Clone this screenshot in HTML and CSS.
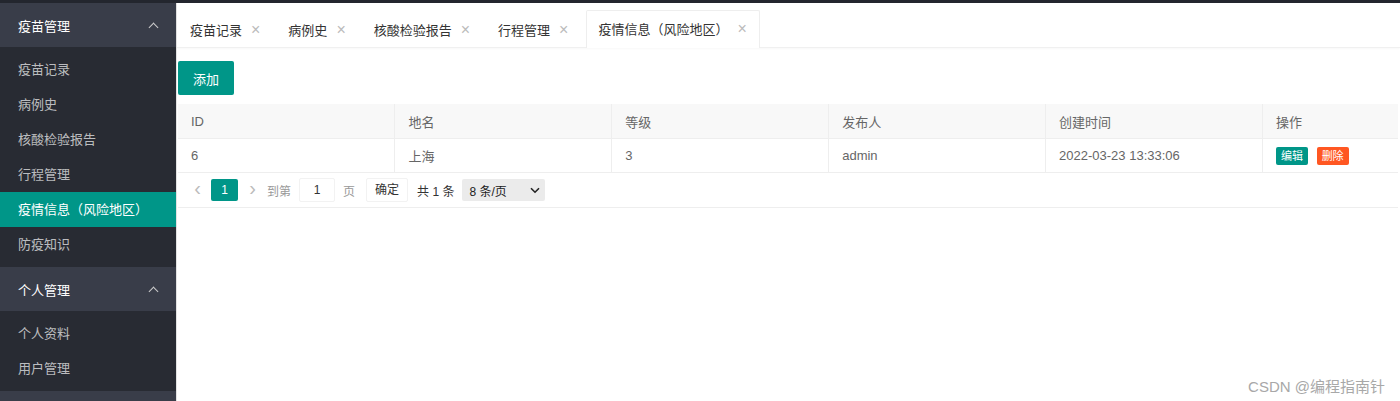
FILE: index.html
```html
<!DOCTYPE html>
<html lang="zh-CN">
<head>
    <meta charset="UTF-8">
    <title>疫情信息（风险地区）</title>
    <link rel="stylesheet" href="styles.css">
</head>
<body>
    <div class="topline"></div>
    <div class="layout">
        <div class="side">
            <div class="nav-group">
                <div class="nav-title">疫苗管理<span class="arrow"></span></div>
                <div class="nav-child">
                    <a class="nav-item">疫苗记录</a>
                    <a class="nav-item">病例史</a>
                    <a class="nav-item">核酸检验报告</a>
                    <a class="nav-item">行程管理</a>
                    <a class="nav-item active">疫情信息（风险地区）</a>
                    <a class="nav-item">防疫知识</a>
                </div>
            </div>
            <div class="nav-group">
                <div class="nav-title">个人管理<span class="arrow"></span></div>
                <div class="nav-child">
                    <a class="nav-item">个人资料</a>
                    <a class="nav-item">用户管理</a>
                </div>
            </div>
            <div class="nav-group">
                <div class="nav-title"></div>
            </div>
        </div>

        <div class="main">
            <ul class="tabs">
                <li class="tab">疫苗记录<span class="close">×</span></li>
                <li class="tab">病例史<span class="close">×</span></li>
                <li class="tab">核酸检验报告<span class="close">×</span></li>
                <li class="tab">行程管理<span class="close">×</span></li>
                <li class="tab active">疫情信息（风险地区）<span class="close">×</span></li>
            </ul>

            <div class="body">
                <div class="toolbar">
                    <button class="btn">添加</button>
                </div>

                <div class="table-box">
                    <table class="table">
                        <thead>
                            <tr>
                                <th>ID</th>
                                <th>地名</th>
                                <th>等级</th>
                                <th>发布人</th>
                                <th>创建时间</th>
                                <th class="col-op">操作</th>
                            </tr>
                        </thead>
                        <tbody>
                            <tr>
                                <td>6</td>
                                <td>上海</td>
                                <td>3</td>
                                <td>admin</td>
                                <td>2022-03-23 13:33:06</td>
                                <td class="col-op">
                                    <span class="btn-xs">编辑</span>
                                    <span class="btn-xs danger">删除</span>
                                </td>
                            </tr>
                        </tbody>
                    </table>

                    <div class="pager">
                        <span class="pg-arrow">&lsaquo;</span>
                        <span class="pg-curr">1</span>
                        <span class="pg-arrow">&rsaquo;</span>
                        <span class="pg-label">到第</span>
                        <span class="pg-input">1</span>
                        <span class="pg-label">页</span>
                        <span class="pg-btn">确定</span>
                        <span class="pg-count">共 1 条</span>
                        <span class="pg-select">8 条/页
                            <svg width="10" height="7" viewBox="0 0 10 7"><path d="M1 1.2 5 5.2 9 1.2" fill="none" stroke="#222" stroke-width="1.6"/></svg>
                        </span>
                    </div>
                </div>
            </div>
        </div>
    </div>

    <div class="mark">CSDN @编程指南针</div>
</body>
</html>
```

FILE: styles.css
```css
body {
    margin: 0;
    font-family: "Liberation Sans", "Noto Sans CJK SC", sans-serif;
    font-size: 13px;
    color: #666;
    background: #fff;
    height: 401px;
    overflow: hidden;
    position: relative;
}

.topline {
    height: 3px;
    background: #23262e;
}

.layout {
    display: flex;
    height: 398px;
}

/* sidebar */
.side {
    width: 176px;
    background: #282b33;
    border-right: 1px solid #e2e2e2;
    flex-shrink: 0;
    overflow: hidden;
}

.nav-title {
    height: 44px;
    background: #393d49;
    color: #fff;
    display: flex;
    align-items: center;
    justify-content: space-between;
    padding: 0 18px;
}

.arrow {
    width: 6px;
    height: 6px;
    border-left: 1.5px solid #ccc;
    border-top: 1.5px solid #ccc;
    transform: rotate(45deg);
    margin-top: 4px;
    margin-right: 1px;
}

.nav-child {
    padding: 5px 0;
}

.nav-item {
    display: block;
    height: 35px;
    line-height: 35px;
    padding-left: 18px;
    color: rgba(255, 255, 255, 0.7);
}

.nav-item.active {
    background: #009688;
    color: #fff;
}

/* main */
.main {
    flex: 1;
    display: flex;
    flex-direction: column;
    min-width: 0;
}

.tabs {
    list-style: none;
    margin: 0;
    padding: 0;
    height: 44px;
    display: flex;
    align-items: flex-end;
    border-bottom: 1px solid #f0f0f0;
    box-shadow: 0 1px 2px rgba(0, 0, 0, 0.03);
}

.tab {
    height: 36px;
    line-height: 36px;
    padding: 0 14px 0 12px;
    color: #333;
    border: 1px solid transparent;
    border-bottom: none;
    margin-bottom: -1px;
}

.tab.active {
    background: #fff;
    border-color: #eee;
    border-radius: 2px 2px 0 0;
    padding: 0 12px 0 11px;
    margin-left: 3px;
    height: 37px;
}

.close {
    color: #bbb;
    font-size: 16px;
    margin-left: 9px;
}

.body {
    padding: 13px 2px 0 1px;
}

.toolbar {
    margin-bottom: 9px;
}

.btn {
    height: 34px;
    padding: 0 15px;
    background: #009688;
    color: #fff;
    border: none;
    border-radius: 2px;
    font-family: inherit;
    font-size: 13px;
}

.table-box {
    border-bottom: 1px solid #eee;
}

.table {
    width: 100%;
    border-collapse: collapse;
    table-layout: fixed;
}

.table th,
.table td {
    padding: 0 13px;
    text-align: left;
    font-weight: normal;
    color: #666;
    border: 1px solid #eee;
    border-top: none;
}

.table th:first-child,
.table td:first-child {
    border-left: none;
}

.table th:last-child,
.table td:last-child {
    border-right: none;
}

.table th {
    background: #f8f8f8;
    height: 34px;
}

.table td {
    height: 33px;
}

.col-op {
    width: 109px;
}

.btn-xs {
    display: inline-block;
    height: 18px;
    line-height: 18px;
    padding: 0 5px;
    font-size: 11px;
    color: #fff;
    background: #009688;
    border-radius: 2px;
    margin-right: 5px;
}

.btn-xs.danger {
    background: #ff5722;
}

/* pagination */
.pager {
    height: 34px;
    display: flex;
    align-items: center;
    padding-left: 9px;
    font-size: 12px;
    color: #333;
}

.pg-arrow {
    color: #bbb;
    font-size: 20px;
    width: 21px;
    text-align: center;
    margin-top: -3px;
}

.pg-curr {
    width: 27px;
    height: 22px;
    line-height: 22px;
    margin: 0 4px 0 3px;
    text-align: center;
    background: #009688;
    color: #fff;
    border-radius: 2px;
}

.pg-label {
    color: #999;
    margin: 0 8px;
}

.pg-arrow + .pg-label {
    margin-left: 4px;
}

.pg-input {
    width: 34px;
    height: 22px;
    line-height: 22px;
    text-align: center;
    border: 1px solid #f2f2f2;
    border-radius: 2px;
}

.pg-btn {
    height: 22px;
    line-height: 22px;
    padding: 0 8px;
    border: 1px solid #f2f2f2;
    border-radius: 2px;
    margin-left: 3px;
}

.pg-count {
    margin: 0 8px 0 9px;
}

.pg-select {
    width: 83px;
    height: 22px;
    box-sizing: border-box;
    display: flex;
    align-items: center;
    justify-content: space-between;
    padding: 0 5px 0 7px;
    background: #ebebeb;
    border-radius: 2px;
    color: #222;
}

.mark {
    position: absolute;
    right: 15px;
    bottom: 5px;
    font-size: 15px;
    color: #a8a8a8;
}
```
